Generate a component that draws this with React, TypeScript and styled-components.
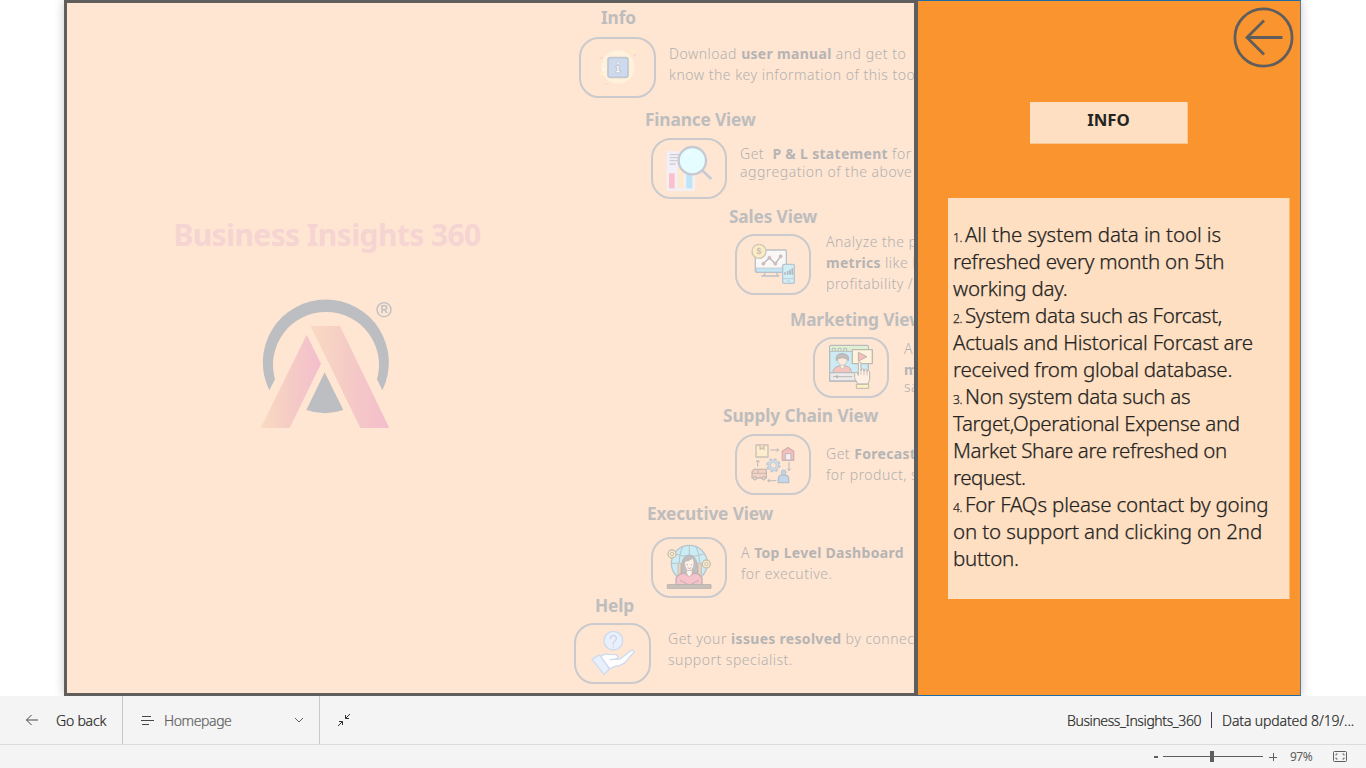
import React from 'react';
import styled, { createGlobalStyle } from 'styled-components';

const GlobalStyle = createGlobalStyle`
  * { box-sizing: border-box; }
  body { margin: 0; background: #fff; font-family: 'Noto Sans', 'Open Sans', sans-serif; overflow: hidden; }
  svg { display: block; flex: none; }
`;

const Page = styled.div`
  display: flex;
  flex-direction: column;
  width: 1366px;
  height: 768px;
`;

const Stage = styled.main`
  display: flex;
  padding-left: 64px;
  height: 696px;
  overflow: hidden;
`;

const Report = styled.div`
  display: flex;
  width: 1237px;
  height: 696px;
  box-shadow: 0 0 10px rgba(0, 0, 0, 0.22);
`;

const Scene = styled.section`
  display: flex;
  width: 854px;
  flex: none;
  overflow: hidden;
  background: #fee6d3;
  border: 3px solid #605e5c;
  border-right-width: 4px;
`;

const Brand = styled.div`
  display: flex;
  flex-direction: column;
  align-items: center;
  width: 507px;
  flex: none;
  padding: 211px 0 0 13px;
`;

const BrandName = styled.h1`
  margin: 0 0 41px;
  font-size: 30px;
  line-height: 42px;
  font-weight: 700;
  letter-spacing: -0.6px;
  white-space: nowrap;
  color: #f5d4d1;
`;

const Views = styled.div`
  width: 340px;
  flex: none;
  padding-top: 3px;
`;

const View = styled.article<{ $h: number }>`
  height: ${p => p.$h}px;
`;

const ViewTitle = styled.h2<{ $x: number; $gap: number; $ls?: number }>`
  margin: 0 0 ${p => p.$gap}px ${p => p.$x}px;
  font-size: 17.3px;
  line-height: 24px;
  font-weight: 700;
  letter-spacing: ${p => p.$ls ?? -0.15}px;
  white-space: nowrap;
  color: #bebdbd;
`;

const ViewRow = styled.div<{ $x: number }>`
  display: flex;
  margin-left: ${p => p.$x}px;
`;

const IconButton = styled.div<{ $w: number }>`
  display: flex;
  align-items: center;
  justify-content: center;
  width: ${p => p.$w}px;
  height: 60.5px;
  flex: none;
  border: 2px solid #cacacc;
  border-radius: 20px;
`;

const Copy = styled.div<{ $top: number; $x: number; $lh?: number }>`
  margin: ${p => p.$top}px 0 0 ${p => p.$x}px;
  line-height: ${p => p.$lh ?? 21}px;
  font-size: 14px;
  font-weight: 300;
  letter-spacing: 0.5px;
  color: #b3b0ae;
  white-space: pre;
  b {
    font-weight: 700;
    letter-spacing: 0.3px;
    color: #b6b4b3;
  }
`;

const Line = styled.div<{ $mt?: number }>`
  margin-top: ${p => p.$mt ?? 0}px;
`;

const Panel = styled.aside`
  display: flex;
  flex-direction: column;
  flex: 1;
  height: 696px;
  background: #fa942f;
  border: 1px solid #1f6ba8;
  border-right-color: #5f7a90;
  border-left: 0;
`;

const BackButton = styled.div`
  align-self: flex-end;
  margin: 6px 6px 0 0;
`;

const PanelTitle = styled.div`
  width: 158px;
  height: 42px;
  margin: 33px 0 54px 112px;
  background: #fedfc1;
  border: 1px solid #fcc590;
  border-top: 0;
  border-left: 0;
  text-align: center;
  font-size: 16.8px;
  line-height: 35px;
  font-weight: 700;
  color: #252423;
`;

const Notes = styled.div`
  width: 342px;
  height: 401px;
  margin-left: 30px;
  padding: 23px 0 0 5px;
  background: #fedfc1;
  border-right: 1px solid #fbb775;
  color: #252423;
`;

const NoteLine = styled.div<{ $ls: number }>`
  height: 27px;
  line-height: 27px;
  font-size: 20.5px;
  font-weight: 300;
  -webkit-text-stroke: 0.25px currentColor;
  letter-spacing: ${p => p.$ls}px;
  white-space: pre;
`;

const Num = styled.span`
  font-size: 12px;
  letter-spacing: -0.4px;
  margin-right: 3px;
`;

const NavBar = styled.nav`
  display: flex;
  align-items: stretch;
  height: 49px;
  background: #f4f4f4;
  border-bottom: 1px solid #dcdcdc;
  font-size: 14px;
  font-weight: 300;
  -webkit-text-stroke: 0.2px currentColor;
`;

const NavCell = styled.div<{ $w: number; $pl: number; $gap: number }>`
  display: flex;
  align-items: center;
  width: ${p => p.$w}px;
  padding-left: ${p => p.$pl}px;
  gap: ${p => p.$gap}px;
  border-right: 1px solid #c8c8c8;
  white-space: nowrap;
`;

const NavText = styled.span<{ $ls: number; $w?: number; $c?: string }>`
  letter-spacing: ${p => p.$ls}px;
  width: ${p => (p.$w ? p.$w + 'px' : 'auto')};
  color: ${p => p.$c ?? '#252423'};
`;

const Collapse = styled.div`
  display: flex;
  align-items: center;
  padding-left: 17px;
`;

const ReportInfo = styled.div`
  display: flex;
  align-items: center;
  margin-left: auto;
  padding-right: 12px;
  white-space: nowrap;
`;

const Divider = styled.span`
  width: 1px;
  height: 16px;
  margin: 0 10px;
  background: #4a3550;
`;

const StatusBar = styled.footer`
  display: flex;
  align-items: center;
  justify-content: flex-end;
  flex: 1;
  padding-right: 19px;
  background: #f4f4f4;
  color: #605e5c;
  font-size: 12px;
`;

const Track = styled.div`
  display: flex;
  align-items: center;
  justify-content: center;
  width: 100px;
  height: 12px;
  margin: 0 6px 0 5px;
  background: linear-gradient(#605e5c, #605e5c) 0 5px / 100% 1px no-repeat;
`;

const Thumb = styled.span`
  width: 4px;
  height: 11px;
  margin-right: 2px;
  background: #605e5c;
`;

const Minus = styled.span`
  width: 4px;
  height: 2px;
  background: #605e5c;
`;

const Percent = styled.span`
  width: 24px;
  margin: 0 19px 0 13px;
  letter-spacing: -0.5px;
`;

const Logo = () => (
  <svg width="134" height="134" viewBox="300 290 402 402">
    <defs>
      <linearGradient id="legA" gradientUnits="userSpaceOnUse" x1="302" x2="483" y1="0" y2="0">
        <stop offset="0" stopColor="#f9dac1" /><stop offset="0.55" stopColor="#f5cac6" /><stop offset="1" stopColor="#f3becd" />
      </linearGradient>
      <linearGradient id="legB" gradientUnits="userSpaceOnUse" x1="452" x2="688" y1="0" y2="0">
        <stop offset="0" stopColor="#f9dac1" /><stop offset="0.5" stopColor="#f5cac6" /><stop offset="1" stopColor="#f3becd" />
      </linearGradient>
    </defs>
    <path d="M328 570A189 189 0 1 1 667 570L651 537A159 159 0 1 0 345 537Z" fill="#bdbec1" />
    <path d="M440 403L483 490L389 683H302Z" fill="url(#legA)" />
    <path d="M452 377H540L688 683H601Z" fill="url(#legB)" />
    <path d="M494 516L550 629Q495 648 439 629Z" fill="#bdbec1" />
    <circle cx="672" cy="328" r="21" fill="none" stroke="#bdbec1" strokeWidth="4" />
    <text x="672" y="339" textAnchor="middle" fontSize="30" fontWeight="600" fontFamily="Liberation Sans, sans-serif" fill="#bdbec1">R</text>
  </svg>
);

const InfoIcon = () => (
  <svg width="38" height="38" viewBox="0 0 114 114">
    <circle cx="57" cy="57" r="50" fill="#fff2dc" />
    <rect x="27" y="29" width="60" height="59" rx="7" fill="#cddaee" stroke="#c1c6cf" strokeWidth="5" />
    <circle cx="57" cy="45" r="4" fill="#fff" stroke="#b7b9c2" strokeWidth="1.5" />
    <path d="M51 53H60V69H65V74H49V69H54V58H51Z" fill="#fff" stroke="#b7b9c2" strokeWidth="2" />
    <circle cx="102" cy="10" r="5" fill="#fff0c0" /><circle cx="8" cy="78" r="6" fill="#fff0c8" />
    <circle cx="107" cy="22" r="3" fill="#fbcfcd" /><circle cx="7" cy="29" r="3" fill="#fbcfcd" /><circle cx="22" cy="107" r="3" fill="#fbcfcd" />
    <circle cx="13" cy="64" r="4" fill="#fffaf0" />
  </svg>
);

const FinanceIcon = () => (
  <svg width="50" height="50" viewBox="43 23 150 150">
    <path d="M51 48H136V167H51Z" fill="#f3eff7" />
    <path d="M60 58H92M60 67H88M60 76H84M60 86H78" stroke="#d0cfd8" strokeWidth="4" />
    <rect x="58" y="114" width="17" height="45" fill="#fbc0cc" />
    <rect x="84" y="98" width="17" height="61" fill="#fdebcb" />
    <rect x="110" y="110" width="18" height="49" fill="#bfe4f3" />
    <path d="M154 102L185 131" stroke="#c9cad2" strokeWidth="8" />
    <circle cx="128" cy="76" r="41" fill="#e5fdff" stroke="#c8cad3" strokeWidth="7" />
    <path d="M103 66Q108 54 121 50" fill="none" stroke="#fff" strokeWidth="3" />
  </svg>
);

const SalesIcon = () => (
  <svg width="44" height="44" viewBox="333 128 132 132" strokeLinejoin="round">
    <rect x="346" y="152" width="93" height="67" rx="4" fill="#f9f8f7" stroke="#bdc0c5" strokeWidth="4" />
    <path d="M348 206H437V218H348Z" fill="#c4e6f3" stroke="#bdc0c5" strokeWidth="2" />
    <path d="M375 220L372 229M410 220L413 229M364 230H418" stroke="#bdc0c5" strokeWidth="4" />
    <path d="M370 193L388 175L406 193L422 171" fill="none" stroke="#b8b7b9" strokeWidth="4" />
    {[[370, 193], [388, 175], [406, 193], [422, 171]].map(([x, y]) => (
      <circle key={x} cx={x} cy={y} r="4.5" fill="#dfb9b8" stroke="#bfb4b5" strokeWidth="2" />
    ))}
    <circle cx="357" cy="156" r="21" fill="#fdebc5" stroke="#cdc7b8" strokeWidth="4" />
    <text x="357" y="165" textAnchor="middle" fontSize="26" fontWeight="700" fontFamily="Liberation Sans, sans-serif" fill="#c2beb4">$</text>
    <rect x="428" y="195" width="35" height="57" rx="4" fill="#d1edf6" stroke="#b6c5cf" strokeWidth="4" />
    <path d="M435 226V219M443 226V215M450 226V211M457 226V207" stroke="#b2b8bd" strokeWidth="5" />
    <path d="M429 238H462M441 245H450" stroke="#b6c5cf" strokeWidth="2.5" />
  </svg>
);

const MarketingIcon = () => (
  <svg width="46" height="46" viewBox="565 434 138 138" strokeLinejoin="round">
    <rect x="570" y="438" width="116" height="107" rx="3" fill="#ccebf4" stroke="#b9bcbf" strokeWidth="4" />
    <path d="M572 440H684V455H572Z" fill="#def0cf" />
    <path d="M570 456H686M578 455V447H587V455M595 455V447H604V455M612 455V447H621V455" fill="none" stroke="#b9bcbf" strokeWidth="3" />
    <path d="M580 520Q580 502 599 500H617Q635 502 635 520Z" fill="#f5c4bc" stroke="#bab6b5" strokeWidth="3" />
    <path d="M602 490H614V503L608 509L602 503Z" fill="#fff0e5" stroke="#bab6b5" strokeWidth="2" />
    <ellipse cx="608" cy="482" rx="14" ry="16" fill="#fcebdc" stroke="#bab6b5" strokeWidth="2" />
    <path d="M590 484Q586 463 607 463Q631 463 626 484L621 478Q608 472 595 478Z" fill="#c0bfbd" stroke="#b5b4b3" strokeWidth="3" />
    <path d="M570 520H686V545H570Z" fill="#ece9e8" stroke="#b9bcbf" strokeWidth="4" />
    <path d="M580 532H638" stroke="#b8b6b5" strokeWidth="3" /><circle cx="592" cy="532" r="4" fill="#b8b6b5" />
    <rect x="638" y="451" width="60" height="42" fill="#fff4db" stroke="#bdbab4" strokeWidth="4" />
    <path d="M656 459L682 472L656 485Z" fill="#f8bfba" stroke="#bfb0ae" strokeWidth="3" />
    <path d="M656 528V490Q660 484 664 490V515V511Q669 505 673 512V517V512Q678 507 682 513V518V515Q686 510 690 517V541L685 554H654L645 537V522Q650 514 656 528Z" fill="#ffeee2" stroke="#b9b6b4" strokeWidth="3" />
    <path d="M650 555H687V567H650Z" fill="#fff0c4" stroke="#bcb8ad" strokeWidth="3" />
    <path d="M673 517V528M682 518V528M664 515V526" stroke="#b9b6b4" strokeWidth="2" />
  </svg>
);

const SupplyIcon = () => (
  <svg width="46" height="46" viewBox="332 125 138 138" strokeLinejoin="round" fill="none">
    <rect x="350" y="137" width="36" height="36" fill="#fdedcc" stroke="#c9c1b5" strokeWidth="4" />
    <path d="M362 137V151L368 146L374 151V137" fill="#f5d9c2" stroke="#c2b9af" strokeWidth="3" />
    <path d="M393 152H418M412 147L418 152L412 157M449 188V213M444 208L449 214L454 208M411 244H386M391 239L385 244L391 249M355 202V194Q354 188 358 184M349 187L357 183L360 189" stroke="#bcb9b8" strokeWidth="3" />
    <path d="M429 183V156L446 145L463 156V183Z" fill="#f4bfbe" stroke="#d4b1b0" strokeWidth="4" />
    <path d="M438 182V163H455V182Z" fill="#f2f0f3" stroke="#c0b6bb" strokeWidth="3" />
    <circle cx="402" cy="198" r="19" stroke="#bdc8d4" strokeWidth="5" strokeDasharray="8 6.92" />
    <circle cx="402" cy="198" r="16" fill="#d1dfed" stroke="#bdc8d4" strokeWidth="3" />
    <circle cx="402" cy="198" r="9" fill="#fee6d3" stroke="#bdc8d4" strokeWidth="3" />
    <path d="M338 236V218L344 210H381V236Z" fill="#f1d2c4" stroke="#c9b9b1" strokeWidth="4" />
    <path d="M338 222H356V212M356 222H382" stroke="#c9b9b1" strokeWidth="3" />
    <circle cx="347" cy="237" r="5" fill="#dfd5cf" stroke="#beb5b0" strokeWidth="3" /><circle cx="373" cy="237" r="5" fill="#dfd5cf" stroke="#beb5b0" strokeWidth="3" />
    <path d="M417 250V238Q418 227 432 227Q448 227 448 238V250Z" fill="#c4d7ea" stroke="#b7c1cc" strokeWidth="4" />
    <circle cx="433" cy="219" r="7" fill="#c8d6e4" stroke="#b7c1cc" strokeWidth="3" />
  </svg>
);

const ExecutiveIcon = () => (
  <svg width="48" height="48" viewBox="75 431 144 144" strokeLinejoin="round" fill="none">
    <circle cx="148" cy="492" r="54" fill="#c9ecf5" stroke="#b8c3c8" strokeWidth="4" />
    <path d="M148 438V480M95 492H200M103 463Q148 480 194 463M130 440Q116 462 118 500M166 440Q180 462 178 500" stroke="#b8c3c8" strokeWidth="3" />
    <path d="M114 526V494Q118 486 123 494V526M174 526V494Q179 486 184 494V526" fill="#eed3bd" stroke="#c6bdb3" strokeWidth="3" />
    <path d="M124 522Q122 467 148 467Q174 467 173 522Z" fill="#c0bec0" stroke="#b7b5b6" strokeWidth="3" />
    <path d="M108 556V538Q111 525 132 521L148 530L164 521Q184 525 186 538V556Z" fill="#f7c3ca" stroke="#c4b1b4" strokeWidth="4" />
    <path d="M140 508H156V523L148 533L140 523Z" fill="#fff4ee" stroke="#c0b6b2" strokeWidth="2" />
    <path d="M134 486Q148 486 157 477Q163 481 162 495Q160 514 148 514Q136 514 134 495Z" fill="#fff1e7" stroke="#c0b6b2" strokeWidth="2.5" />
    <path d="M142 494V498M154 494V498M143 505Q148 510 154 505M120 543L142 554M176 543L154 554" stroke="#bdb0ae" strokeWidth="3" />
    <path d="M82 556H213V567H82Z" fill="#c9c1b9" stroke="#b8b4b0" strokeWidth="3" />
    <circle cx="96" cy="464" r="12" fill="#feebc8" stroke="#c7c1b3" strokeWidth="4" /><circle cx="96" cy="464" r="5" stroke="#c7c1b3" strokeWidth="3" />
    <circle cx="199" cy="494" r="12" fill="#feebc8" stroke="#c7c1b3" strokeWidth="4" /><circle cx="199" cy="494" r="5" stroke="#c7c1b3" strokeWidth="3" />
  </svg>
);

const HelpIcon = () => (
  <svg width="46" height="46" viewBox="90 121 138 138" strokeLinejoin="round" strokeLinecap="round">
    <circle cx="160" cy="153" r="28" fill="#eaf0fb" stroke="#cddaf0" strokeWidth="4" />
    <path d="M151 147Q151 138 160 138Q170 138 169 148Q168 154 160 158V163M160 170V171" fill="none" stroke="#c9d5eb" strokeWidth="4" />
    <path d="M119 202Q133 190 147 194L169 195Q178 201 170 207L151 210L180 208L213 183Q224 178 222 187L197 216Q183 229 164 230L149 238Z" fill="#fff" stroke="#cddaf0" strokeWidth="4" />
    <path d="M96 209L115 197Q119 195 122 200L147 235Q149 239 145 242L132 254Z" fill="#e9f0fc" stroke="#cddaf0" strokeWidth="4" />
  </svg>
);

type ViewDef = {
  title: string;
  h: number;
  titleX: number;
  gap: number;
  ls?: number;
  buttonX: number;
  buttonW: number;
  icon: React.ReactNode;
  copyX: number;
  copyTop: number;
  lh?: number;
  copy: React.ReactNode;
};

const views: ViewDef[] = [
  { title: 'Info', h: 102, titleX: 27, gap: 7, buttonX: 5, buttonW: 77, icon: <InfoIcon />, copyX: 13, copyTop: 6,
    copy: <><Line>Download <b>user manual</b> and get to</Line><Line>know the key information of this tool.</Line></> },
  { title: 'Finance View', h: 97, titleX: 71, gap: 6, buttonX: 77, buttonW: 76, icon: <FinanceIcon />, copyX: 13, copyTop: 7, lh: 18,
    copy: <><Line>Get  <b>P &amp; L statement</b> for</Line><Line>aggregation of the above</Line></> },
  { title: 'Sales View', h: 103, titleX: 155, gap: 5, buttonX: 161, buttonW: 76, icon: <SalesIcon />, copyX: 15, copyTop: -3,
    copy: <><Line>Analyze the performance</Line><Line><b>metrics</b> like Net Sales</Line><Line>profitability / growth</Line></> },
  { title: 'Marketing View', h: 96, titleX: 216, gap: 5, buttonX: 239, buttonW: 76, icon: <MarketingIcon />, copyX: 15, copyTop: 1,
    copy: <><Line>Analyze</Line><Line><b>metrics</b></Line><Line $mt={-4}>sales</Line></> },
  { title: 'Supply Chain View', h: 98, titleX: 149, gap: 6, ls: -0.1, buttonX: 161, buttonW: 76, icon: <SupplyIcon />, copyX: 15, copyTop: 9,
    copy: <><Line>Get <b>Forecast</b></Line><Line>for product, segment</Line></> },
  { title: 'Executive View', h: 92, titleX: 73, gap: 11, buttonX: 77, buttonW: 76, icon: <ExecutiveIcon />, copyX: 14, copyTop: 5,
    copy: <><Line>A <b>Top Level Dashboard</b></Line><Line>for executive.</Line></> },
  { title: 'Help', h: 90, titleX: 21, gap: 5, buttonX: 0, buttonW: 77, icon: <HelpIcon />, copyX: 17, copyTop: 5,
    copy: <><Line>Get your <b>issues resolved</b> by connecting</Line><Line>support specialist.</Line></> },
];

const notes: { n?: number; t: string; ls: number }[] = [
  { n: 1, t: 'All the system data in tool is', ls: -0.08 },
  { t: 'refreshed every month on 5th', ls: -0.23 },
  { t: 'working day.', ls: -0.2 },
  { n: 2, t: 'System data such as Forcast,', ls: -0.32 },
  { t: 'Actuals and Historical Forcast are', ls: -0.23 },
  { t: 'received from global database.', ls: -0.23 },
  { n: 3, t: 'Non system data such as', ls: -0.28 },
  { t: 'Target,Operational Expense and', ls: -0.33 },
  { t: 'Market Share are refreshed on', ls: -0.35 },
  { t: 'request.', ls: -0.5 },
  { n: 4, t: 'For FAQs please contact by going', ls: -0.17 },
  { t: 'on to support and clicking on 2nd', ls: -0.13 },
  { t: 'button.', ls: -0.3 },
];

export default function App() {
  return (
    <Page>
      <GlobalStyle />
      <Stage>
        <Report>
          <Scene>
            <Brand>
              <BrandName>Business Insights 360</BrandName>
              <Logo />
            </Brand>
            <Views>
              {views.map(v => (
                <View key={v.title} $h={v.h}>
                  <ViewTitle $x={v.titleX} $gap={v.gap} $ls={v.ls}>{v.title}</ViewTitle>
                  <ViewRow $x={v.buttonX}>
                    <IconButton $w={v.buttonW}>{v.icon}</IconButton>
                    <Copy $top={v.copyTop} $x={v.copyX} $lh={v.lh}>{v.copy}</Copy>
                  </ViewRow>
                </View>
              ))}
            </Views>
          </Scene>
          <Panel>
            <BackButton>
              <svg width="62" height="62" viewBox="0 0 62 62" fill="none" stroke="#605e5c" strokeWidth="2.8">
                <circle cx="31.5" cy="30.5" r="28.6" />
                <path d="M50.5 30.5H14.5M32 13.5L15 30.5L32 47.5" />
              </svg>
            </BackButton>
            <PanelTitle>INFO</PanelTitle>
            <Notes>
              {notes.map(l => (
                <NoteLine key={l.t} $ls={l.ls}>{l.n && <Num>{l.n}.</Num>}{l.t}</NoteLine>
              ))}
            </Notes>
          </Panel>
        </Report>
      </Stage>
      <NavBar>
        <NavCell $w={123} $pl={25} $gap={17}>
          <svg width="14" height="12" viewBox="0 0 14 12" fill="none" stroke="#484644"><path d="M13 6H1.5M6.5 1L1.5 6L6.5 11" /></svg>
          <NavText $ls={-0.2}>Go back</NavText>
        </NavCell>
        <NavCell $w={197} $pl={18} $gap={10}>
          <svg width="13" height="11" viewBox="0 0 13 11" stroke="#484644"><path d="M1 1.5H10M0 5.5H13M1 9.5H8" /></svg>
          <NavText $ls={-0.4} $w={120} $c="#605e5c">Homepage</NavText>
          <svg width="10" height="6" viewBox="0 0 10 6" fill="none" stroke="#605e5c"><path d="M1 1L5 5L9 1" /></svg>
        </NavCell>
        <Collapse>
          <svg width="14" height="14" viewBox="0 0 14 14" fill="none" stroke="#323130">
            <path d="M13 1L8.5 5.5M8.5 2V5.5H12M1 13L5.5 8.5M2 8.5H5.5V12" />
          </svg>
        </Collapse>
        <ReportInfo>
          <NavText $ls={-0.4}>Business_Insights_360</NavText>
          <Divider />
          <NavText $ls={-0.12}>Data updated 8/19/...</NavText>
        </ReportInfo>
      </NavBar>
      <StatusBar>
        <Minus />
        <Track><Thumb /></Track>
        <svg width="8" height="8" viewBox="0 0 8 8" stroke="#605e5c"><path d="M0 4.5H8M4.5 0V8" /></svg>
        <Percent>97%</Percent>
        <svg width="14" height="11" viewBox="0 0 14 11" fill="none" stroke="#605e5c">
          <rect x="0.5" y="0.5" width="13" height="10" rx="1" />
          <path d="M3 4.5V3H4.5M9.5 3H11V4.5M11 6.5V8H9.5M4.5 8H3V6.5" />
        </svg>
      </StatusBar>
    </Page>
  );
}
